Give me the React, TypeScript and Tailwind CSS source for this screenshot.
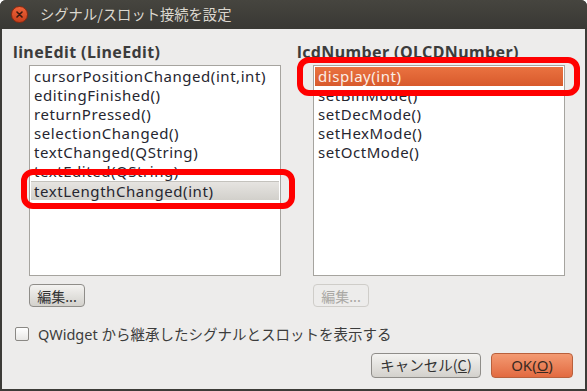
import React from "react";

const font = "'Noto Sans', 'Noto Sans CJK JP', sans-serif";

function ListBox({ items, selected, selStyle }: { items: string[]; selected: number; selStyle: "gray" | "orange" }) {
  return (
    <div className="w-[252px] h-[211px] bg-white border border-[#a6a49f] p-px">
      {items.map((t, i) => {
        const sel = i === selected;
        let cls = "h-[19px] leading-[19px] pl-[3px] text-[15px] tracking-[0.55px] text-[#262630] whitespace-nowrap";
        if (sel && selStyle === "gray") cls = "h-[19px] leading-[18px] pl-[3px] text-[15px] tracking-[0.55px] text-[#262630] whitespace-nowrap bg-gradient-to-b from-[#e6e4e1] to-[#d2d0cb] border-t border-[#c4c2bd]";
        if (sel && selStyle === "orange") cls = "h-[19px] leading-[19px] pl-[3px] text-[15px] tracking-[0.55px] text-[#fbeee6] whitespace-nowrap bg-gradient-to-b from-[#ea7240] to-[#d85a2c]";
        return (
          <div key={i} className={cls}>
            {t}
          </div>
        );
      })}
    </div>
  );
}

export default function App() {
  return (
    <div className="w-[587px] h-[391px] bg-white" style={{ fontFamily: font }}>
      <div className="relative w-[587px] h-[391px] rounded-t-[6px] overflow-hidden bg-[#3c3b37] flex flex-col">
        {/* title bar */}
        <div className="h-[29px] flex items-center bg-gradient-to-b from-[#46453f] to-[#393834] shrink-0">
          <div className="ml-[11px] w-[17px] h-[17px] rounded-full bg-gradient-to-b from-[#f0643a] to-[#c8401c] border border-[#8e2a10] flex items-center justify-center">
            <svg width="7" height="7" viewBox="0 0 7 7">
              <path d="M1 1 L6 6 M6 1 L1 6" stroke="#3a1a10" strokeWidth="1.6" strokeLinecap="round" />
            </svg>
          </div>
          <div className="ml-[12px] text-[14.3px] text-[#dcd8cf] leading-none" style={{ fontFamily: "'Noto Sans CJK JP', sans-serif" }}>
            シグナル/スロット接続を設定
          </div>
        </div>
        {/* body */}
        <div className="flex-1 mx-[2px] mb-[2px] bg-[#edeceb] flex flex-col">
          <div className="flex pt-[13px] pl-[11px]">
            <div className="w-[284px] flex flex-col">
              <div className="h-[23px] text-[16px] font-bold text-[#3c3c3c] leading-[20px] tracking-[0.4px]">lineEdit (LineEdit)</div>
              <div className="pl-[16px]">
                <ListBox
                  items={[
                    "cursorPositionChanged(int,int)",
                    "editingFinished()",
                    "returnPressed()",
                    "selectionChanged()",
                    "textChanged(QString)",
                    "textEdited(QString)",
                    "textLengthChanged(int)",
                  ]}
                  selected={6}
                  selStyle="gray"
                />
              </div>
              <div className="pl-[16px] mt-[8px]">
                <div className="w-[56px] h-[23px] rounded-[4px] border border-[#8f8d89] bg-gradient-to-b from-[#f4f3f1] to-[#d3d1cc] text-[14px] text-[#333] flex items-center justify-center leading-none" style={{ fontFamily: "'Noto Sans CJK JP', sans-serif" }}>
                  編集...
                </div>
              </div>
            </div>
            <div className="w-[284px] flex flex-col">
              <div className="h-[23px] text-[16px] font-bold text-[#3c3c3c] leading-[20px] tracking-[0.4px]">lcdNumber (QLCDNumber)</div>
              <div className="pl-[16px]">
                <ListBox
                  items={["display(int)", "setBinMode()", "setDecMode()", "setHexMode()", "setOctMode()"]}
                  selected={0}
                  selStyle="orange"
                />
              </div>
              <div className="pl-[16px] mt-[8px]">
                <div className="w-[56px] h-[23px] rounded-[4px] border border-[#cfcdc9] bg-[#edeceb] text-[14px] text-[#aaa8a4] flex items-center justify-center leading-none" style={{ fontFamily: "'Noto Sans CJK JP', sans-serif" }}>
                  編集...
                </div>
              </div>
            </div>
          </div>
          <div className="flex items-center mt-[20px] pl-[13px]">
            <div className="w-[14px] h-[14px] rounded-[2px] border border-[#8a8884] bg-gradient-to-b from-white to-[#e8e7e5]" />
            <div className="ml-[9px] text-[14.5px] text-[#3c3c3c] leading-none" style={{ fontFamily: "'Noto Sans', 'Noto Sans CJK JP', sans-serif" }}>
              QWidget から継承したシグナルとスロットを表示する
            </div>
          </div>
          <div className="flex justify-end gap-[10px] pr-[12px] mt-[11px]">
            <div className="w-[110px] h-[25px] rounded-[4px] border border-[#8f8d89] bg-gradient-to-b from-[#f4f3f1] to-[#d3d1cc] text-[14.5px] text-[#333] flex items-center justify-center leading-none" style={{ fontFamily: "'Noto Sans CJK JP', sans-serif" }}>
              キャンセル(<span className="underline">C</span>)
            </div>
            <div className="w-[82px] h-[25px] rounded-[4px] border border-[#b9603c] bg-gradient-to-b from-[#f39a72] to-[#e26a40] text-[15px] text-[#3a2a22] flex items-center justify-center leading-none">
              OK(<span className="underline">O</span>)
            </div>
          </div>
        </div>
        {/* annotation overlays */}
        <div className="absolute left-[21px] top-[169px] w-[274px] h-[40px] border-[6px] border-[#ff0000] rounded-[12px] pointer-events-none" />
        <div className="absolute left-[297px] top-[57px] w-[283px] h-[39px] border-[6px] border-[#ff0000] rounded-[12px] pointer-events-none" />
      </div>
    </div>
  );
}
